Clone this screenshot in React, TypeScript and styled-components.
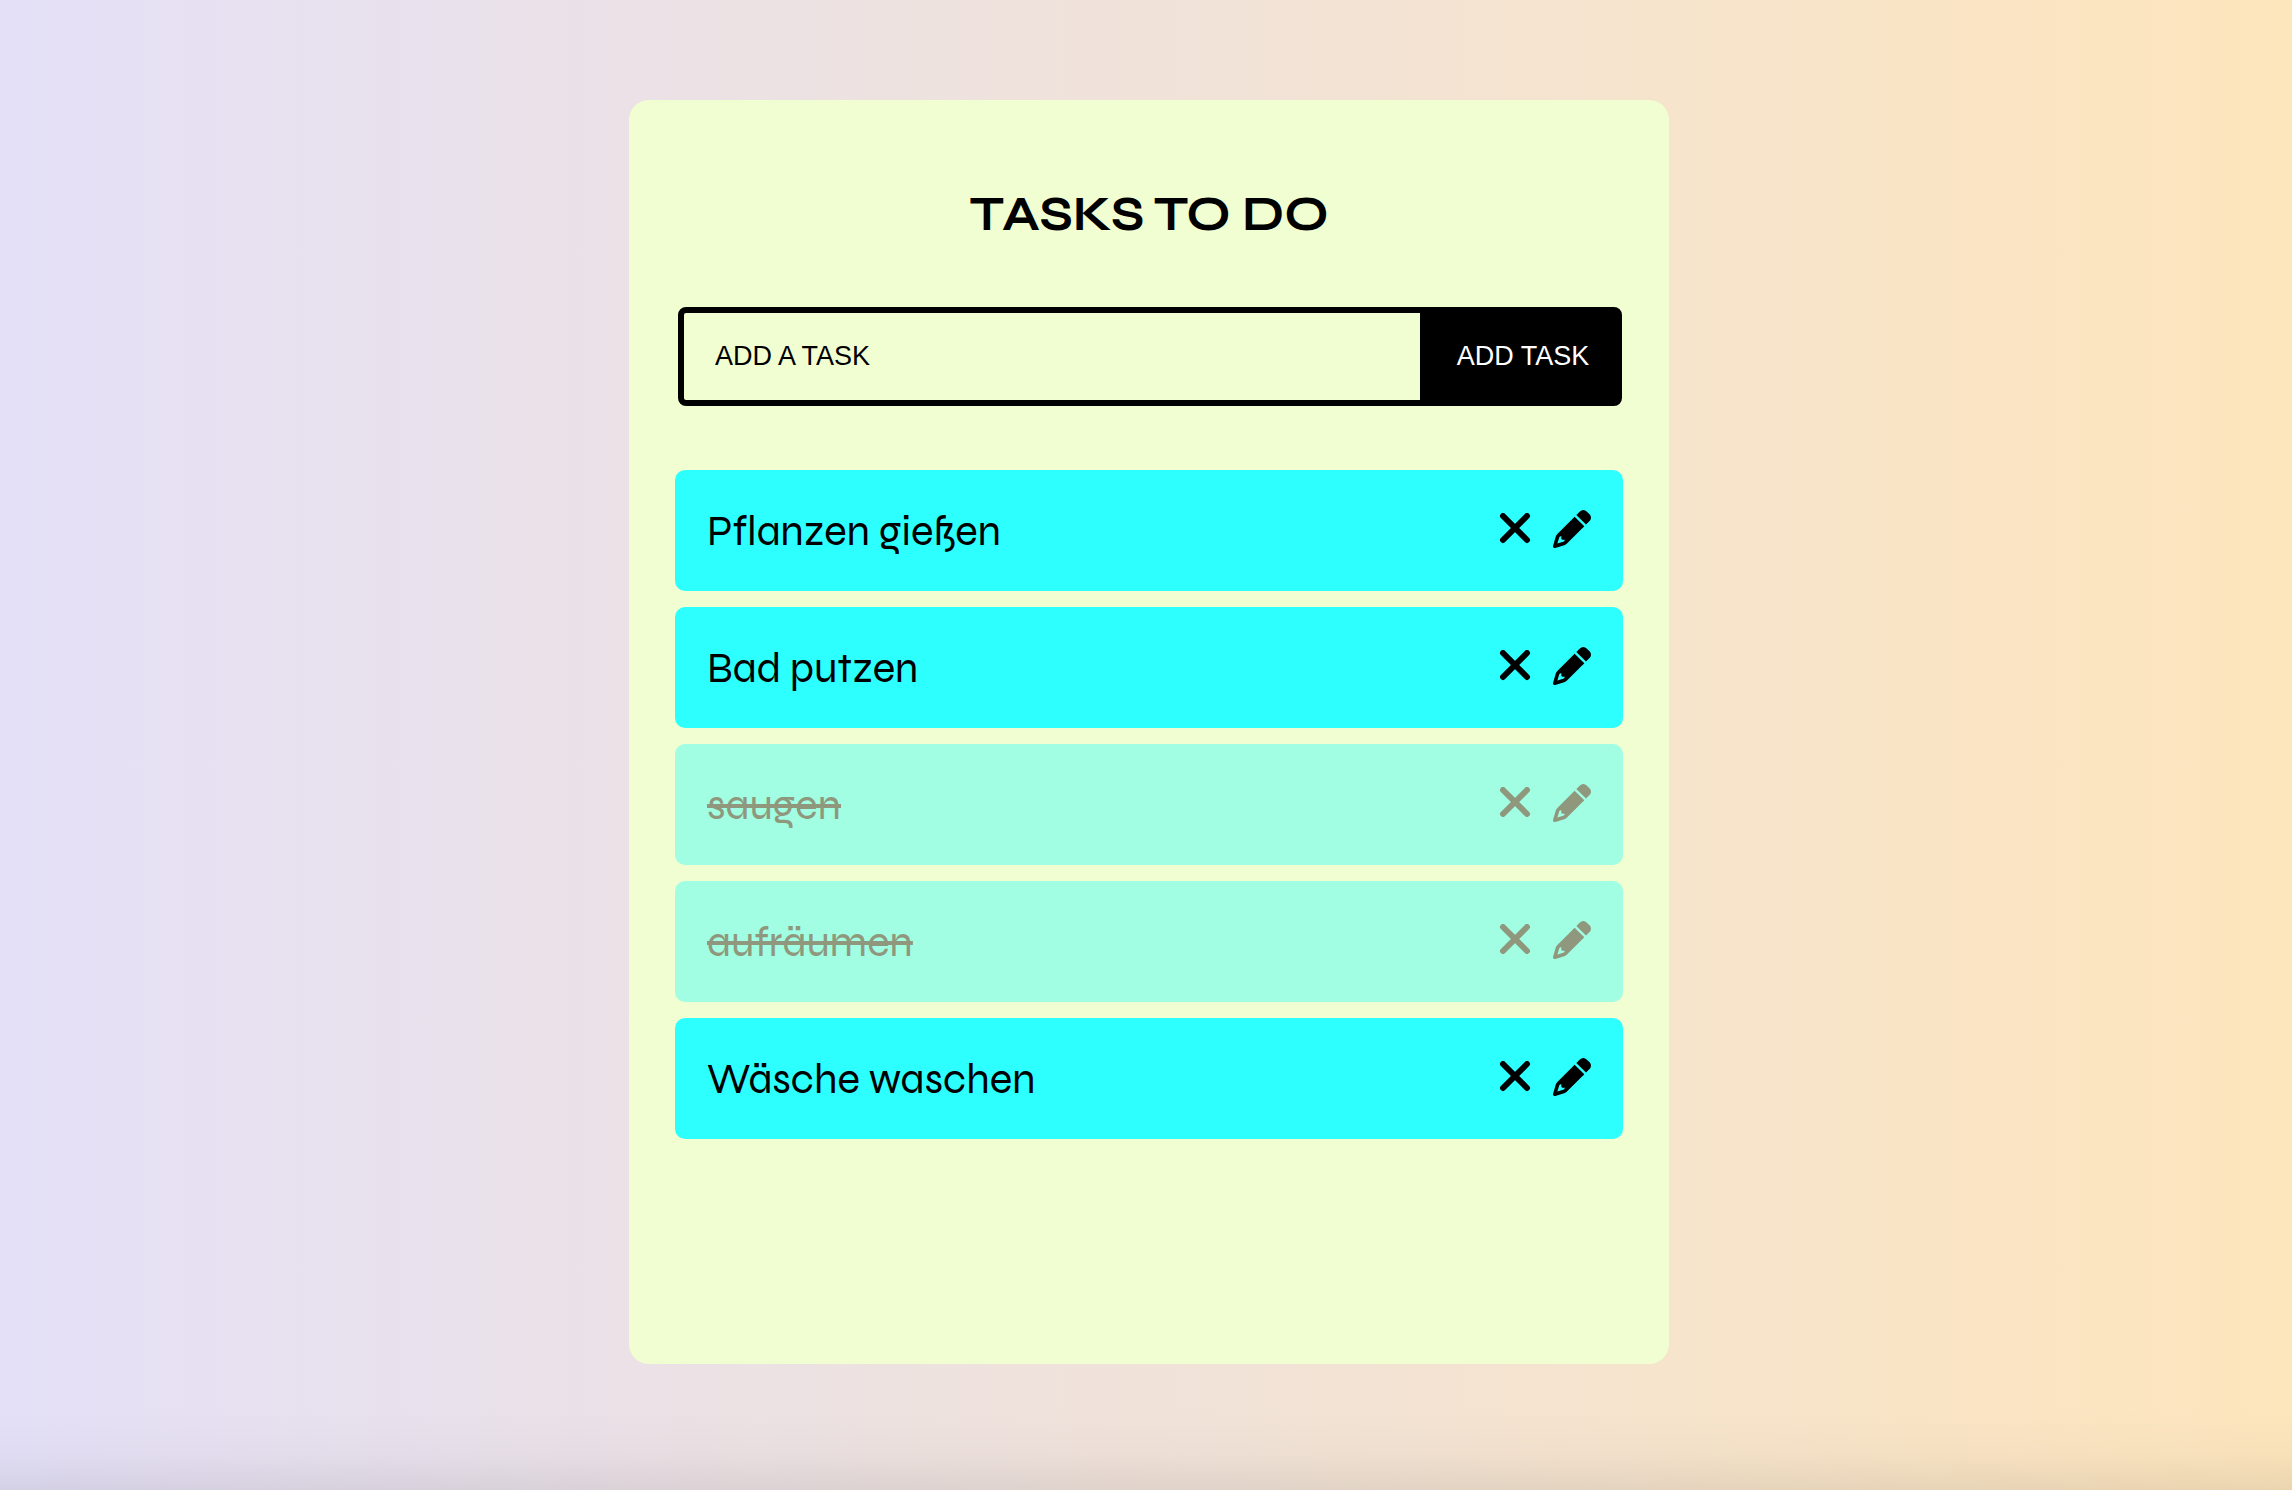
import React, { useState } from "react";
import styled, { createGlobalStyle } from "styled-components";

const GlobalStyle = createGlobalStyle`
  *, *::before, *::after { box-sizing: border-box; }
  body {
    margin: 0;
    color: #000;
    font-family: Syne, Inter, "Liberation Sans", sans-serif;
  }
`;

const Page = styled.div`
  min-height: 100vh;
  padding: 100px 0 126px 6px;
  display: flex;
  justify-content: center;
  align-items: stretch;
  background:
    linear-gradient(to top, rgba(0, 0, 0, 0.07), rgba(0, 0, 0, 0.02) 36px, transparent 80px),
    linear-gradient(90deg, #e4e0f7, #fde5bc);
`;

const Card = styled.main`
  width: 100%;
  max-width: 1040px;
  padding: 85px 46px;
  border-radius: 20px;
  background: #f0fed1;
`;

const Title = styled.h1`
  margin: 0 0 62px;
  font-size: 48px;
  line-height: 60px;
  font-weight: 700;
  text-align: center;
  text-transform: uppercase;
`;

const TaskForm = styled.form`
  display: flex;
  height: 99px;
  margin: 0 1px 64px 3px;
  border: 6px solid #000;
  border-radius: 8px;
  background: #000;
`;

const TaskInput = styled.input`
  flex: 1;
  min-width: 0;
  padding: 0 31px;
  border: 0;
  border-radius: 2px 0 0 2px;
  outline: 0;
  background: #f0fed1;
  color: #000;
  font: 27px "Liberation Sans", Arial, sans-serif;
  &::placeholder { color: #000; opacity: 1; }
`;

const AddButton = styled.button`
  width: 196px;
  padding: 0 0 0 10px;
  border: 0;
  background: #000;
  color: #fff;
  font: 27px "Liberation Sans", Arial, sans-serif;
  text-align: center;
  cursor: pointer;
`;

const TaskList = styled.ul`
  display: flex;
  flex-direction: column;
  gap: 16px;
  margin: 0;
  padding: 0;
  list-style: none;
`;

const TaskItem = styled.li<{ $done: boolean }>`
  display: flex;
  align-items: center;
  gap: 22px;
  height: 121px;
  padding: 0 32px;
  border-radius: 10px;
  background: #2dffff;
  opacity: ${({ $done }) => ($done ? 0.4 : 1)};
`;

const TaskName = styled.span<{ $done: boolean }>`
  flex: 1;
  padding-top: 2px;
  font-size: 42px;
  line-height: 50px;
  font-weight: 400;
  text-decoration: ${({ $done }) => ($done ? "line-through 4px" : "none")};
`;

const IconButton = styled.button`
  display: flex;
  padding: 0 0 3px;
  border: 0;
  background: none;
  color: inherit;
  cursor: pointer;
`;

const CrossIcon = () => (
  <svg width="32" height="32" viewBox="0 0 32 32" fill="none" stroke="currentColor" strokeWidth="6" strokeLinecap="round" aria-hidden="true">
    <path d="M4 3 28 27M28 3 4 27" />
  </svg>
);

const PencilIcon = () => (
  <svg width="38" height="38" viewBox="0 0 512 512" fill="currentColor" aria-hidden="true">
    <path d="M410.3 231l11.3-11.3-33.9-33.9-62.1-62.1L291.7 89.8l-11.3 11.3-22.6 22.6L58.6 322.9c-10.4 10.4-18 23.3-22.2 37.4L1 480.7c-2.5 8.4-.2 17.5 6.1 23.7s15.3 8.5 23.7 6.1l120.3-35.4c14.1-4.2 27-11.8 37.4-22.2L387.7 253.7 410.3 231zM160 399.4l-9.1 22.7c-4 3.1-8.5 5.4-13.3 6.9L59.4 452l23-78.1c1.4-4.9 3.8-9.4 6.9-13.3l22.7-9.1v32c0 8.8 7.2 16 16 16h32zM362.7 18.7L348.3 33.2 325.7 55.8 314.3 67.1l33.9 33.9 62.1 62.1 33.9 33.9 11.3-11.3 22.6-22.6 14.5-14.5c25-25 25-65.5 0-90.5L453.3 18.7c-25-25-65.5-25-90.5 0z" />
  </svg>
);

interface Task {
  id: number;
  name: string;
  done: boolean;
}

const initialTasks: Task[] = [
  { id: 1, name: "Pflanzen gießen", done: false },
  { id: 2, name: "Bad putzen", done: false },
  { id: 3, name: "saugen", done: true },
  { id: 4, name: "aufräumen", done: true },
  { id: 5, name: "Wäsche waschen", done: false },
];

export default function App() {
  const [tasks, setTasks] = useState(initialTasks);
  const [draft, setDraft] = useState("");

  const addTask = (event: React.FormEvent) => {
    event.preventDefault();
    const name = draft.trim();
    if (!name) return;
    setTasks([...tasks, { id: Date.now(), name, done: false }]);
    setDraft("");
  };

  const toggleTask = (id: number) =>
    setTasks(tasks.map((task) => (task.id === id ? { ...task, done: !task.done } : task)));

  const removeTask = (id: number) => setTasks(tasks.filter((task) => task.id !== id));

  const editTask = (task: Task) => {
    setDraft(task.name);
    removeTask(task.id);
  };

  return (
    <>
      <GlobalStyle />
      <Page>
        <Card>
          <Title>Tasks to do</Title>
          <TaskForm onSubmit={addTask}>
            <TaskInput
              type="text"
              aria-label="Add a task"
              placeholder="ADD A TASK"
              value={draft}
              onChange={(event) => setDraft(event.target.value)}
            />
            <AddButton type="submit">ADD TASK</AddButton>
          </TaskForm>
          <TaskList>
            {tasks.map((task) => (
              <TaskItem key={task.id} $done={task.done}>
                <TaskName $done={task.done} onClick={() => toggleTask(task.id)}>
                  {task.name}
                </TaskName>
                <IconButton type="button" aria-label="Delete task" onClick={() => removeTask(task.id)}>
                  <CrossIcon />
                </IconButton>
                <IconButton type="button" aria-label="Edit task" onClick={() => editTask(task)}>
                  <PencilIcon />
                </IconButton>
              </TaskItem>
            ))}
          </TaskList>
        </Card>
      </Page>
    </>
  );
}
